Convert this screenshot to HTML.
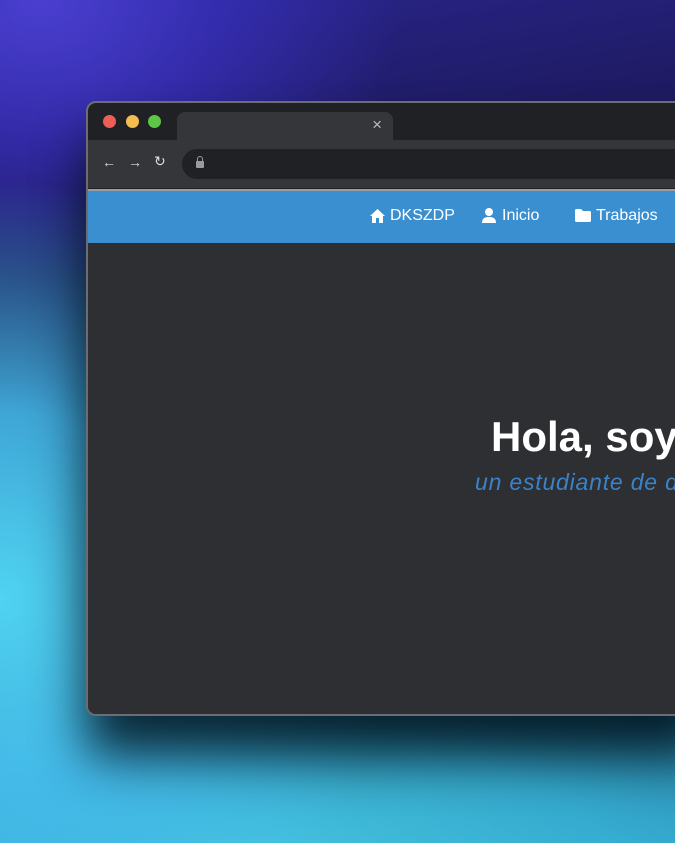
<!DOCTYPE html>
<html><head><style>
*{margin:0;padding:0;box-sizing:border-box}
body{width:675px;height:843px;overflow:hidden;position:relative;font-family:"Liberation Sans",sans-serif;
background:
radial-gradient(ellipse 400px 420px at 0px 600px,#50d4f2 0%,rgba(70,190,240,.85) 45%,rgba(40,120,220,0) 100%),
radial-gradient(ellipse 360px 280px at 40px 0px,#4a3fd0 0%,rgba(60,50,200,.6) 50%,rgba(40,30,150,0) 100%),
radial-gradient(ellipse 700px 260px at 250px 860px,#45c4e0 0%,rgba(60,190,225,.7) 50%,rgba(30,100,200,0) 100%),
linear-gradient(170deg,#2a2690 0%,#14113a 40%,#0f2a44 75%,#2a90b8 100%);}
.win{position:absolute;left:86px;top:101px;width:620px;height:615px;border-radius:10px;border:2px solid #6c6d72;overflow:hidden;background:#202124;box-shadow:0 40px 50px rgba(0,15,25,.85)}
.dot{position:absolute;top:12px;width:13px;height:13px;border-radius:50%}
.tab{position:absolute;left:89px;top:9px;width:216px;height:30px;background:#35363a;border-radius:8px 8px 0 0}
.tool{position:absolute;left:0;top:37px;width:100%;height:48px;background:#35363a}
.url{position:absolute;left:94px;top:9px;width:600px;height:30px;background:#202124;border-radius:15px}
.nav{position:absolute;left:0;top:86px;width:100%;height:54px;background:#3a8fd0;border-top:2px solid #9a9da2}
.nav span{position:absolute;top:16px;color:#fff;font-size:16px}
.content{position:absolute;left:0;top:140px;width:100%;height:480px;background:#2e2f32}
h1{position:absolute;left:403px;top:170px;color:#fff;font-size:42px;font-weight:bold;white-space:nowrap}
.sub{position:absolute;left:387px;top:226px;color:#3b82c8;font-size:23px;font-style:italic;white-space:nowrap;letter-spacing:.8px}
</style></head><body>
<div class="win">
 <div class="dot" style="left:15px;background:#ec5f57"></div>
 <div class="dot" style="left:38px;background:#f4bd4f"></div>
 <div class="dot" style="left:60px;background:#5ec647"></div>
 <div class="tab"><span style="position:absolute;right:11px;top:3px;color:#bbb;font-size:17px">×</span></div>
 <div class="tool">
  <span style="position:absolute;left:14px;top:14px;color:#ddd;font-size:14px">←</span>
  <span style="position:absolute;left:40px;top:14px;color:#ddd;font-size:14px">→</span>
  <span style="position:absolute;left:66px;top:13px;color:#ddd;font-size:14px">↻</span>
  <div class="url"><div style="position:absolute;left:14px;top:12px;width:8px;height:7px;background:#9a9a9a;border-radius:1px"></div><div style="position:absolute;left:15px;top:7px;width:6px;height:7px;border:1.5px solid #9a9a9a;border-radius:3px 3px 0 0"></div></div>
 </div>
 <div class="nav">
  <svg style="position:absolute;left:282px;top:18px" width="15" height="14" viewBox="0 0 15 14"><path d="M7.5 0L0 7h2v7h4V9h3v5h4V7h2z" fill="#fff"/></svg>
  <span style="left:302px">DKSZDP</span>
  <svg style="position:absolute;left:394px;top:17px" width="14" height="15" viewBox="0 0 14 15"><circle cx="7" cy="4" r="4" fill="#fff"/><path d="M0 15c0-5 3-6 7-6s7 1 7 6z" fill="#fff"/></svg>
  <span style="left:414px">Inicio</span>
  <svg style="position:absolute;left:487px;top:18px" width="16" height="13" viewBox="0 0 16 13"><path d="M0 1.5Q0 0 1.5 0H6l2 2h6.5Q16 2 16 3.5v8Q16 13 14.5 13h-13Q0 13 0 11.5z" fill="#fff"/></svg>
  <span style="left:508px">Trabajos</span>
 </div>
 <div class="content">
  <h1>Hola, soy</h1>
  <div class="sub">un estudiante de d</div>
 </div>
</div>
</body></html>
